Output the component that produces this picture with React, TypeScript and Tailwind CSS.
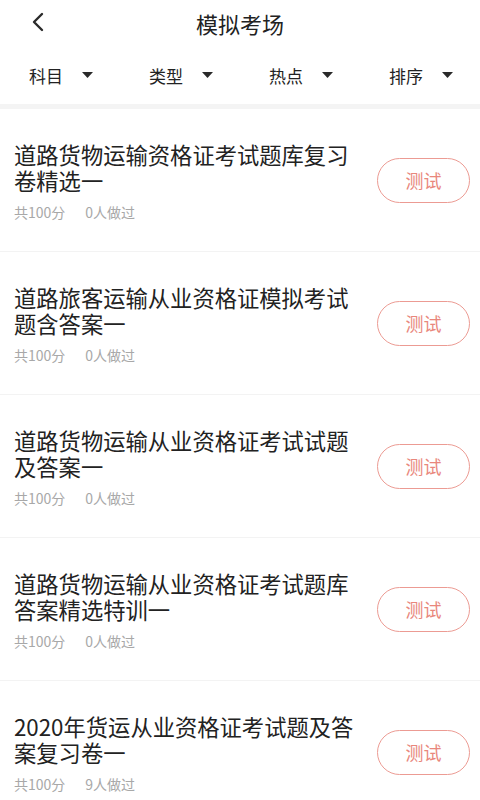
import React from "react";

const filters = ["科目", "类型", "热点", "排序"];

const papers = [
  { lines: ["道路货物运输资格证考试题库复习", "卷精选一"], done: 0 },
  { lines: ["道路旅客运输从业资格证模拟考试", "题含答案一"], done: 0 },
  { lines: ["道路货物运输从业资格证考试试题", "及答案一"], done: 0 },
  { lines: ["道路货物运输从业资格证考试题库", "答案精选特训一"], done: 0 },
  { lines: ["2020年货运从业资格证考试题及答", "案复习卷一"], done: 9 },
];

function Caret() {
  return (
    <svg width="11" height="6" viewBox="0 0 11 6" className="ml-[19px]">
      <path d="M0 0h11L5.5 6z" fill="#2a2a2a" />
    </svg>
  );
}

export default function App() {
  return (
    <div
      className="w-[480px] h-[800px] overflow-hidden bg-white text-[#222]"
      style={{ fontFamily: '"Noto Sans CJK SC", "Noto Sans", sans-serif' }}
    >
      {/* header */}
      <div className="relative h-[46px] flex items-center justify-center">
        <svg
          width="14"
          height="20"
          viewBox="0 0 14 20"
          className="absolute left-[31px] top-[12px]"
        >
          <path
            d="M11 2L3 10l8 8"
            fill="none"
            stroke="#2a2a2a"
            strokeWidth="2.4"
            strokeLinecap="round"
            strokeLinejoin="round"
          />
        </svg>
        <span className="text-[22px] leading-none">模拟考场</span>
      </div>

      {/* filters */}
      <div className="h-[58px] flex items-center">
        {filters.map((f) => (
          <div key={f} className="w-[121px] flex items-center pl-[29px]">
            <span className="text-[17px] leading-none">{f}</span>
            <Caret />
          </div>
        ))}
      </div>
      <div className="h-[5px] bg-[#f4f4f4]" />

      {/* list */}
      {papers.map((p, i) => (
        <div
          key={i}
          className="h-[143px] flex items-center justify-between pl-[14px] pr-[10px] border-b border-[#f3f3f3]"
        >
          <div className="flex flex-col">
            {p.lines.map((l) => (
              <span key={l} className="text-[22.3px] leading-[26px] text-[#222] whitespace-nowrap">
                {l}
              </span>
            ))}
            <div className="mt-[11px] flex gap-[20px] text-[14px] leading-[16px] text-[#a8a8a8]">
              <span>共100分</span>
              <span>{p.done}人做过</span>
            </div>
          </div>
          <div className="w-[93px] h-[45px] rounded-full border-[1.5px] border-[#ec9b93] flex items-center justify-center text-[18px] text-[#e9877c]">
            测试
          </div>
        </div>
      ))}
    </div>
  );
}
